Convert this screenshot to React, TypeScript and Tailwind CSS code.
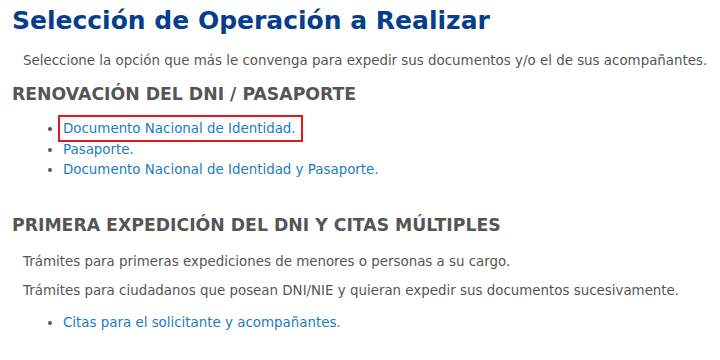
export default function App() {
  const font = { fontFamily: '"DejaVu Sans", Verdana, sans-serif' };
  return (
    <div className="h-[360px] w-[720px] overflow-hidden bg-white" style={font}>
      <h1 className="pl-[12px] pt-[5px] text-[25px] font-bold leading-[32px] text-[#063d8c]">
        Selección de Operación a Realizar
      </h1>
      <p className="mt-[14px] pl-[23px] text-[13.4px] leading-[20px] text-[#555]">
        Seleccione la opción que más le convenga para expedir sus documentos y/o el de sus acompañantes.
      </p>
      <h2 className="mt-[13px] pl-[12px] text-[17.3px] font-bold leading-[20px] text-[#555]">
        RENOVACIÓN DEL DNI / PASAPORTE
      </h2>
      <ul className="mt-[15px] list-disc pl-[63px] text-[13.4px] leading-[20.5px] text-[#555]">
        <li>
          <a href="#" className="-ml-[5px] border-2 border-[#e8141c] py-[4px] pl-[3px] pr-[5px] text-[#1a7cc4]">
            Documento Nacional de Identidad.
          </a>
        </li>
        <li>
          <a href="#" className="text-[#1a7cc4]">Pasaporte.</a>
        </li>
        <li>
          <a href="#" className="text-[#1a7cc4]">Documento Nacional de Identidad y Pasaporte.</a>
        </li>
      </ul>
      <h2 className="mt-[34px] pl-[12px] text-[17.3px] font-bold leading-[20px] text-[#555]">
        PRIMERA EXPEDICIÓN DEL DNI Y CITAS MÚLTIPLES
      </h2>
      <p className="mt-[17px] pl-[23px] text-[13.4px] leading-[20px] text-[#555]">
        Trámites para primeras expediciones de menores o personas a su cargo.
      </p>
      <p className="mt-[9px] pl-[23px] text-[13.4px] leading-[20px] text-[#555]">
        Trámites para ciudadanos que posean DNI/NIE y quieran expedir sus documentos sucesivamente.
      </p>
      <ul className="mt-[12px] list-disc pl-[63px] text-[13.4px] leading-[20px] text-[#555]">
        <li>
          <a href="#" className="text-[#1a7cc4]">Citas para el solicitante y acompañantes.</a>
        </li>
      </ul>
    </div>
  );
}
